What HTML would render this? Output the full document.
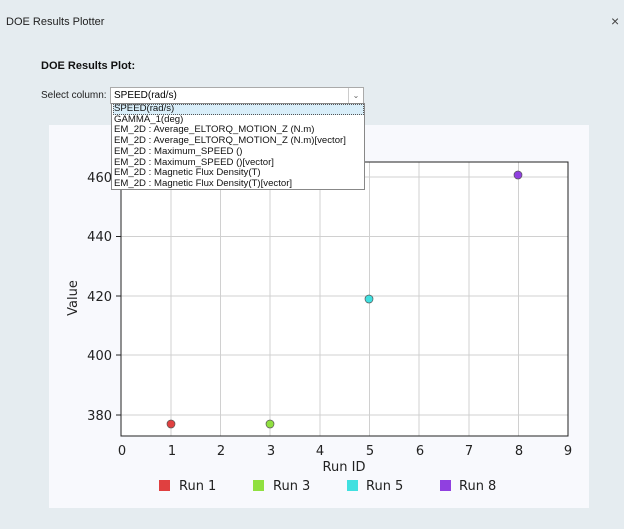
<!DOCTYPE html><html><head><style>
body{margin:0;width:624px;height:529px;background:#e5ecf0;font-family:"Liberation Sans",sans-serif;position:relative;overflow:hidden}
.a{position:absolute}
</style></head><body>
<div class="a" style="left:6px;top:16px;font-size:11px;color:#222">DOE Results Plotter</div>
<div class="a" style="left:611px;top:13px;font-size:14px;color:#444">×</div>
<div class="a" style="left:41px;top:60px;font-size:11px;font-weight:bold;color:#111">DOE Results Plot:</div>
<div class="a" style="left:41px;top:90px;font-size:10px;color:#222">Select column:</div>
<div class="a" style="left:49px;top:125px;width:540px;height:383px;background:#f8f9fd"></div>
<svg class="a" style="left:0;top:0" width="624" height="529" font-family="DejaVu Sans,sans-serif">
<rect x="121" y="162" width="447" height="274" fill="#fff"/>
<g stroke="#d0d0d0" stroke-width="1">
<line x1="171" y1="162" x2="171" y2="436"/><line x1="220.5" y1="162" x2="220.5" y2="436"/><line x1="270" y1="162" x2="270" y2="436"/><line x1="320" y1="162" x2="320" y2="436"/><line x1="369.5" y1="162" x2="369.5" y2="436"/><line x1="419" y1="162" x2="419" y2="436"/><line x1="469" y1="162" x2="469" y2="436"/><line x1="518.5" y1="162" x2="518.5" y2="436"/>
<line x1="121" y1="177" x2="568" y2="177"/><line x1="121" y1="236.5" x2="568" y2="236.5"/><line x1="121" y1="296" x2="568" y2="296"/><line x1="121" y1="355" x2="568" y2="355"/><line x1="121" y1="415" x2="568" y2="415"/>
</g>
<rect x="121" y="162" width="447" height="274" fill="none" stroke="#222" stroke-width="1"/>
<g stroke="#222"><line x1="116" y1="177" x2="121" y2="177"/><line x1="116" y1="236.5" x2="121" y2="236.5"/><line x1="116" y1="296" x2="121" y2="296"/><line x1="116" y1="355" x2="121" y2="355"/><line x1="116" y1="415" x2="121" y2="415"/></g>
<g font-size="13" fill="#222" text-anchor="end"><text x="112" y="182">460</text><text x="112" y="241">440</text><text x="112" y="301">420</text><text x="112" y="360">400</text><text x="112" y="420">380</text></g>
<g font-size="13" fill="#222" text-anchor="middle"><text x="122" y="455">0</text><text x="172" y="455">1</text><text x="221" y="455">2</text><text x="271" y="455">3</text><text x="320" y="455">4</text><text x="370" y="455">5</text><text x="420" y="455">6</text><text x="469" y="455">7</text><text x="519" y="455">8</text><text x="568" y="455">9</text>
<text x="344" y="471">Run ID</text>
<text transform="translate(77,298) rotate(-90)">Value</text></g>
<g stroke="#555" stroke-width="0.7"><circle cx="171" cy="424" r="4" fill="#e04040"/><circle cx="270" cy="424" r="4" fill="#90e040"/><circle cx="369" cy="299" r="4" fill="#40e0e0"/><circle cx="518" cy="175" r="4" fill="#9040e0"/></g>
<g font-size="13" fill="#222"><rect x="159" y="480" width="11" height="11" fill="#e04040"/><text x="179" y="490">Run 1</text>
<rect x="253" y="480" width="11" height="11" fill="#90e040"/><text x="273" y="490">Run 3</text>
<rect x="347" y="480" width="11" height="11" fill="#40e0e0"/><text x="366" y="490">Run 5</text>
<rect x="440" y="480" width="11" height="11" fill="#9040e0"/><text x="459" y="490">Run 8</text></g>
</svg>
<div class="a" style="left:110px;top:87px;background:#fff;border:1px solid #aaa;font-size:10px;line-height:15px;padding-left:3px;box-sizing:border-box;width:254px;height:17px">SPEED(rad/s)<div class="a" style="right:0;top:0;width:14px;height:15px;border-left:1px solid #ccc;font-size:8px;color:#666;text-align:center">⌄</div></div>
<div class="a" style="left:111px;top:103px;width:254px;height:87px;background:#fff;border:1px solid #888;box-sizing:border-box;font-size:9.6px;line-height:10.7px;color:#111;padding-left:2px;overflow:hidden">
<div style="background:#d9eef9;outline:1px dotted #555;outline-offset:-1px;margin-left:-1px;padding-left:1px">SPEED(rad/s)</div>
<div>GAMMA_1(deg)</div><div>EM_2D : Average_ELTORQ_MOTION_Z (N.m)</div><div>EM_2D : Average_ELTORQ_MOTION_Z (N.m)[vector]</div><div>EM_2D : Maximum_SPEED ()</div><div>EM_2D : Maximum_SPEED ()[vector]</div><div>EM_2D : Magnetic Flux Density(T)</div><div>EM_2D : Magnetic Flux Density(T)[vector]</div>
</div>
</body></html>
